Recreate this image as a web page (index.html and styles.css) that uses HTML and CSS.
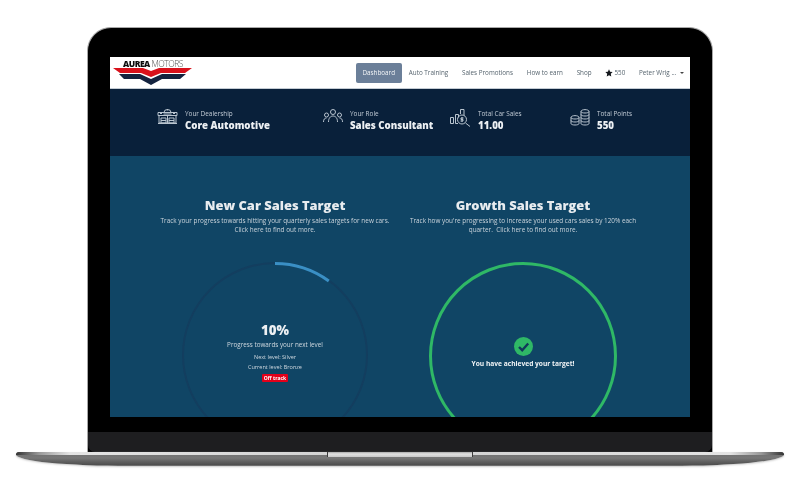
FILE: index.html
```html
<!DOCTYPE html>
<html lang="en">
<head>
  <meta charset="UTF-8">
  <title>Aurea Motors Dashboard</title>
  <link rel="stylesheet" href="styles.css">
</head>
<body>
  <div class="lid">
    <div class="screen">
      <!-- top navigation -->
      <header class="nav">
        <div class="logo">
          <div class="logo-text"><b>AUREA</b> MOTORS</div>
          <svg class="logo-mark" width="80" height="18" viewBox="0 0 80 18">
            <polygon fill="#d8111b" points="0,0 30,0 38,3 46,0 79,0 72,5 48,5 38,9 28,5 7,5"/>
            <polygon fill="#14233f" points="6,6 27,6 38,11 49,6 73,6 67,11 49,11 38,17 27,11 11,11"/>
          </svg>
        </div>
        <nav class="menu">
          <a class="active">Dashboard</a>
          <a>Auto Training</a>
          <a>Sales Promotions</a>
          <a>How to earn</a>
          <a>Shop</a>
          <a class="points"><svg width="8" height="8" viewBox="0 0 24 24"><path fill="#14171c" d="M12 1l3.400 7.200 7.600 1-5.600 5.400 1.400 7.800L12 18.600 5.200 22.400l1.400-7.800L1 9.200l7.600-1z"/></svg>550</a>
          <a class="user">Peter Wrig ... <i class="caret"></i></a>
        </nav>
      </header>

      <!-- stats -->
      <section class="stats">
        <div class="stat">
          <svg class="stat-icon" width="21" height="15" viewBox="0 0 21 15">
            <path d="M1 3.500h19v3H1zM2 6.500v7.500h17V6.500M1 14.500h19M7 3.500a3.500 3 0 0 1 7 0M10.500 0v1.500M3 4.500h2M6.500 5h8M16 4.500h2M4 9h5v5H4zM12 9h5v5h-5zM4 11.500h5M12 11.500h5M10.500 7v7"/>
          </svg>
          <div><div class="stat-label">Your Dealership</div><div class="stat-value">Core Automotive</div></div>
        </div>
        <div class="stat">
          <svg class="stat-icon" width="20" height="14" viewBox="0 0 20 14">
            <circle cx="10" cy="3" r="2.500"/><circle cx="3.500" cy="6" r="2"/><circle cx="16.500" cy="6" r="2"/>
            <path d="M5.500 13c0-4 2-6 4.500-6s4.500 2 4.500 6M.500 13c0-2.500 1-4 3-4M19.500 13c0-2.500-1-4-3-4"/>
          </svg>
          <div><div class="stat-label">Your Role</div><div class="stat-value">Sales Consultant</div></div>
        </div>
        <div class="stat">
          <svg class="stat-icon" width="21" height="18" viewBox="0 0 21 18">
            <path d="M.500 8.500h3v6h-3zM5.500 5.500h3v3M5.500 5.500v9h2.500M10.500 5V.500h3.500v6"/>
            <circle cx="12" cy="10.500" r="4.500"/>
            <path d="M15.500 14l4.500 3.500M12 8v5M13.500 9h-2.500v1.500h2v1.500h-2.500"/>
          </svg>
          <div><div class="stat-label">Total Car Sales</div><div class="stat-value">11.00</div></div>
        </div>
        <div class="stat">
          <svg class="stat-icon" width="20" height="17" viewBox="0 0 20 17">
            <path d="M1 8.500c0-2.500 8-2.500 8 0v6c0 2-8 2-8 0zM1 8.500c0 2 8 2 8 0M1 11.500c0 2 8 2 8 0"/>
            <path d="M11 2.500c0-2.500 8-2.500 8 0v12c0 2-8 2-8 0zM11 2.500c0 2 8 2 8 0M11 5.500c0 2 8 2 8 0M11 8.500c0 2 8 2 8 0M11 11.500c0 2 8 2 8 0"/>
          </svg>
          <div><div class="stat-label">Total Points</div><div class="stat-value">550</div></div>
        </div>
      </section>

      <!-- targets -->
      <main class="targets">
        <section class="target">
          <h2>New Car Sales Target</h2>
          <p class="intro">Track your progress towards hitting your quarterly sales targets for new cars.<br>Click here to find out more.</p>
          <div class="ring ring-progress">
            <svg class="ring-arc" width="186" height="186" viewBox="0 0 186 186">
              <path d="M93 1.500A91.500 91.500 0 0 1 146.800 19" fill="none" stroke="#3a8fc4" stroke-width="3"/>
            </svg>
            <div class="percent">10%</div>
            <div class="ring-text">Progress towards your next level</div>
            <div class="ring-small">Next level: Silver</div>
            <div class="ring-small">Current level: Bronze</div>
            <span class="badge">Off track</span>
          </div>
        </section>
        <section class="target">
          <h2>Growth Sales Target</h2>
          <p class="intro">Track how you're progressing to increase your used cars sales by 120% each<br>quarter.&nbsp; Click here to find out more.</p>
          <div class="ring ring-done">
            <svg width="19" height="19" viewBox="0 0 19 19">
              <circle cx="9.500" cy="9.500" r="9.500" fill="#2fb866"/>
              <path d="M5 10l3.200 3.200L14.200 6.500" fill="none" stroke="#11385a" stroke-width="2.400"/>
            </svg>
            <div class="achieved">You have achieved your target!</div>
          </div>
        </section>
      </main>
    </div>
    <div class="chin"></div>
  </div>

  <div class="base">
    <div class="notch"></div>
  </div>
</body>
</html>
```

FILE: styles.css
```css
body {
  margin: 0;
  height: 479px;
  overflow: hidden;
  background: #fff;
  font-family: "Open Sans", sans-serif;
}

/* laptop */
.lid {
  box-sizing: border-box;
  width: 626px;
  height: 425px;
  margin: 27px 0 0 87px;
  padding-top: 29px;
  background: #000;
  border: 1px solid #a8a8a8;
  border-bottom: 0;
  border-radius: 24px 24px 0 0;
  display: flex;
  flex-direction: column;
  align-items: center;
}

.screen {
  width: 580px;
  height: 360px;
  overflow: hidden;
  flex: none;
  filter: blur(0.3px);
}

.chin {
  width: 100%;
  height: 20px;
  margin-top: auto;
  background: #1e1e20;
  border-radius: 0 0 7px 7px;
}

.base {
  position: relative;
  width: 768px;
  height: 14px;
  margin-left: 16px;
  background: linear-gradient(#6e6e6e 0, #787878 6px, #5e5e5e 10px, #4e4e4e 13px, #8e8e8e 14px);
  border-radius: 4px 4px 130px 130px / 3px 3px 13px 13px;
  box-shadow: 0 1px 2px #ccc;
}

/* light strip along the front edge, fades out at the tips */
.base::before {
  content: "";
  position: absolute;
  top: 0;
  left: 0;
  right: 0;
  height: 3px;
  background: linear-gradient(90deg, #333 0, #999 3%, #e4e4e4 7%, #cfcfcf 50%, #e4e4e4 93%, #999 97%, #333 100%);
  border-radius: 4px 4px 0 0;
}

.notch {
  position: absolute;
  top: 0;
  left: 311px;
  width: 146px;
  height: 5px;
  box-sizing: border-box;
  background: linear-gradient(#aaa, #e2e2e2 2px, #c8c8c8);
  border: 1px solid #3c3c3c;
  border-width: 0 1px;
}

/* nav */
.nav {
  height: 32px;
  background: #fff;
  display: flex;
  justify-content: space-between;
  align-items: center;
  border-bottom: 1px solid #c4ccd4;
  box-sizing: border-box;
}

.logo {
  margin-left: 3px;
  width: 80px;
  padding-top: 1px;
}

.logo-text {
  font-size: 8.500px;
  line-height: 8px;
  color: #555;
  text-align: center;
  letter-spacing: -0.5px;
  font-weight: 300;
}

.logo-text b {
  color: #0c0c0c;
  font-weight: 800;
}

.logo-mark {
  display: block;
}

.menu {
  display: flex;
  align-items: center;
  gap: 13.800px;
  padding-right: 6px;
  font-size: 6.300px;
  color: #56646e;
}

.menu a.active {
  background: #6b7f99;
  color: #f2f4f7;
  padding: 5px 6.500px;
  line-height: 10px;
  border-radius: 2px;
  margin-right: -6.500px;
}

.points {
  display: flex;
  align-items: center;
  gap: 1px;
}

.caret {
  display: inline-block;
  border: 2px solid transparent;
  border-top-color: #444;
  border-bottom: 0;
  margin-left: 2px;
  vertical-align: middle;
}

/* stats */
.stats {
  height: 67px;
  box-sizing: border-box;
  padding: 20px 0 0 47px;
  background: #09203a;
  display: grid;
  grid-template-columns: 166px 127px 120px 1fr;
}

.stat {
  display: flex;
  gap: 7px;
  align-items: flex-start;
}

.stat-icon {
  fill: none;
  stroke: #b9c4cf;
  stroke-width: 1;
  flex: none;
}

.stat-label {
  font-size: 6.400px;
  line-height: 10px;
  color: #c3ccd6;
}

.stat-value {
  font-size: 9.700px;
  line-height: 14px;
  font-weight: 800;
  color: #edf0f3;
}

/* targets */
.targets {
  height: 261px;
  box-sizing: border-box;
  padding: 40px 43px 0 41px;
  background: #104565;
  display: grid;
  grid-template-columns: minmax(0, 1fr) minmax(0, 1fr);
}

.target {
  text-align: center;
  color: #dfe5ea;
}

.target h2 {
  margin: 0;
  font-size: 12.900px;
  line-height: 18px;
  font-weight: 800;
  color: #e8ecef;
}

.intro {
  margin: 3px 0 0;
  font-size: 6.400px;
  line-height: 8.500px;
  color: #c9d3db;
  white-space: nowrap;
}

.ring {
  position: relative;
  box-sizing: border-box;
  margin: 28px auto 0;
  border-radius: 50%;
  display: flex;
  flex-direction: column;
  align-items: center;
  justify-content: flex-start;
}

.ring-progress {
  width: 186px;
  height: 186px;
  border: 2px solid #133e5f;
  padding-top: 57px;
}

.ring-arc {
  position: absolute;
  top: -2px;
  left: -2px;
}

.ring-done {
  width: 188px;
  height: 188px;
  border: 3px solid #2fb866;
  padding-top: 72px;
}

.percent {
  font-size: 13.200px;
  line-height: 18px;
  font-weight: 800;
  color: #edf0f3;
}

.ring-text {
  font-size: 6.300px;
  line-height: 12px;
  color: #cfd8df;
}

.ring-small {
  font-size: 5.500px;
  line-height: 10px;
  color: #cfd8df;
}

.ring-text + .ring-small {
  margin-top: 1px;
}

.badge {
  margin-top: 2px;
  padding: 0 2px;
  background: #e2001a;
  color: #fff;
  font-size: 5px;
  line-height: 8px;
  font-weight: 700;
  border-radius: 1px;
}

.achieved {
  margin-top: 3px;
  font-size: 6.650px;
  line-height: 10px;
  font-weight: 700;
  color: #f1f4f6;
}
```
